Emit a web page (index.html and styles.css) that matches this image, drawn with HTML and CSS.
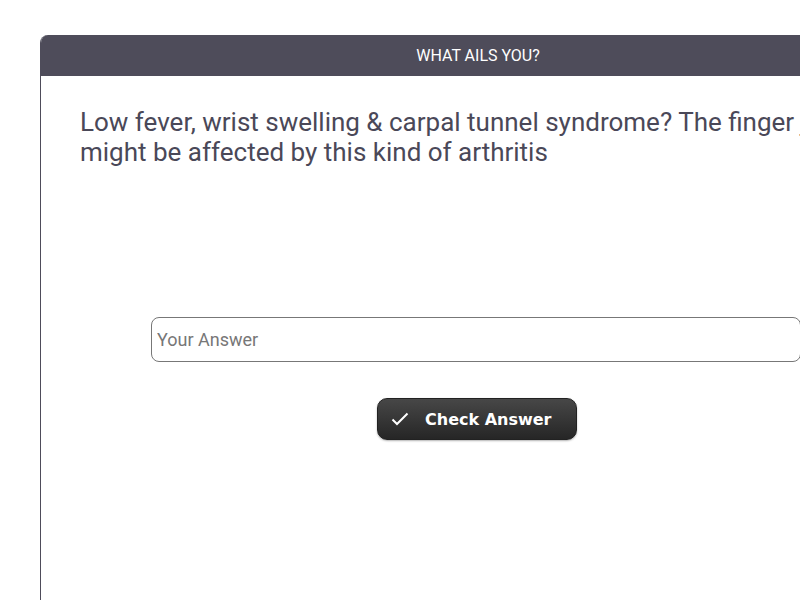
FILE: index.html
```html
<!DOCTYPE html>
<html>
<head>
<meta charset="utf-8">
<link rel="stylesheet" href="styles.css">
</head>
<body>
<div class="card">
  <div class="card-header">WHAT AILS YOU?</div>
  <div class="card-body">
    <p class="question">Low fever, wrist swelling &amp; carpal tunnel syndrome? The finger joints might be affected by this kind of arthritis</p>
    <div class="answer">
      <input class="answer-input" type="text" placeholder="Your Answer">
      <button class="check-btn" type="button">
        <svg class="check-icon" width="20" height="20" viewBox="0 0 20 20"><path d="M2.5 10.5 L7 15 L17.5 4.5" fill="none" stroke="#fff" stroke-width="2"/></svg>
        <span>Check Answer</span>
      </button>
    </div>
  </div>
</div>
</body>
</html>
```
FILE: styles.css
```css
html, body {
  margin: 0;
  padding: 0;
  background: #fff;
  overflow: hidden;
  width: 800px;
  height: 600px;
}
.card {
  margin: 35px 0 0 40px;
  width: 872px;
  height: 700px;
  border-left: 1px solid #4e4c5a;
  border-right: 1px solid #4e4c5a;
  border-radius: 8px 8px 0 0;
  overflow: hidden;
  box-sizing: border-box;
}
.card-header {
  height: 41px;
  background: #4e4c5a;
  color: #fff;
  font-family: Roboto, sans-serif;
  font-size: 16px;
  line-height: 41px;
  text-align: center;
  padding-left: 4px;
}
.card-body {
  padding: 31px 39px 0 39px;
}
.question {
  margin: 0;
  font-family: Roboto, sans-serif;
  font-size: 26px;
  line-height: 30px;
  color: #4a4858;
  height: 180px;
}
.answer {
  display: flex;
  flex-direction: column;
  align-items: center;
  gap: 36px;
  padding-top: 30px;
}
.answer-input {
  width: 650px;
  height: 45px;
  box-sizing: border-box;
  border: 1px solid #777;
  border-radius: 8px;
  padding: 0 5px;
  font-family: Roboto, sans-serif;
  font-size: 18px;
  color: #333;
  outline: none;
}
.answer-input::placeholder {
  color: #777;
}
.check-btn {
  width: 200px;
  height: 42px;
  margin-left: 2px;
  border: 1px solid #222;
  border-radius: 10px;
  background: linear-gradient(#474747, #262626);
  color: #fff;
  font-family: "DejaVu Sans", sans-serif;
  font-weight: bold;
  font-size: 16px;
  display: flex;
  align-items: center;
  padding: 0 0 0 12px;
  gap: 15px;
  box-shadow: 0 1px 2px rgba(0,0,0,0.3);
  cursor: pointer;
}
.check-icon {
  display: block;
}
```
